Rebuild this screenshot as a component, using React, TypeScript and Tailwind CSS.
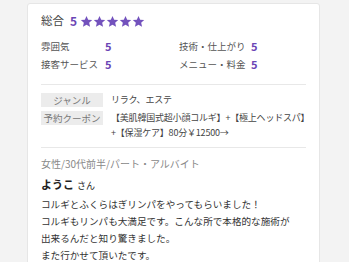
const font = "font-['Noto_Sans_CJK_JP','Noto_Sans',sans-serif]";

function Star() {
  return (
    <svg width="13" height="13" viewBox="0 0 24 24" className="fill-[#7352bd]">
      <path d="M12 1.8l3.1 6.9 7.4.7-5.6 5 1.7 7.4L12 17.9 5.4 21.8l1.7-7.4-5.6-5 7.4-.7z" />
    </svg>
  );
}

function Rating({ label, value, w }: { label: string; value: string; w: string }) {
  return (
    <div className="flex items-center h-[18px] leading-[18px]">
      <span className={`${w} text-[9.5px] text-[#555]`}>{label}</span>
      <span className="text-[11px] font-bold text-[#6b46b5]">{value}</span>
    </div>
  );
}

function InfoRow({ label, children }: { label: string; children: React.ReactNode }) {
  return (
    <div className="flex items-start">
      <span className="w-[62px] shrink-0 h-[14px] leading-[14px] mt-[0.5px] bg-[#ececec] text-center text-[9.5px] text-[#777]">
        {label}
      </span>
      <div className="ml-[8px] text-[9px] leading-[15px] text-[#444] whitespace-nowrap tracking-[-0.2px]">
        {children}
      </div>
    </div>
  );
}

export default function App() {
  return (
    <div className={`w-[349px] h-[262px] overflow-hidden bg-[#f3f3f3] ${font}`}>
      <div className="ml-[27px] mt-[3px] w-[293px] bg-white border border-[#e6e6e6] rounded-[3px] pl-[13px] pr-[10px] pt-[9px] h-[280px]">
        <div className="flex items-center h-[16px]">
          <span className="text-[11.5px] text-[#444] w-[29px]">総合</span>
          <span className="text-[12px] font-bold text-[#6b46b5] mr-[3px]">5</span>
          <div className="flex">
            <Star />
            <Star />
            <Star />
            <Star />
            <Star />
          </div>
        </div>
        <div className="grid grid-cols-[138px_1fr] mt-[8px]">
          <Rating label="雰囲気" value="5" w="w-[64px]" />
          <Rating label="技術・仕上がり" value="5" w="w-[72px]" />
          <Rating label="接客サービス" value="5" w="w-[64px]" />
          <Rating label="メニュー・料金" value="5" w="w-[72px]" />
        </div>
        <div className="border-t border-[#e8e8e8] mt-[11px] mr-[3px]" />
        <div className="flex flex-col gap-[3px] mt-[7px]">
          <InfoRow label="ジャンル">リラク、エステ</InfoRow>
          <InfoRow label="予約クーポン">
            【美肌韓国式超小顔コルギ】+【極上ヘッドスパ】
            <br />+【保湿ケア】80分￥12500→
          </InfoRow>
        </div>
        <div className="border-t border-[#e8e8e8] mt-[7px] mr-[3px]" />
        <div className="mt-[8px] text-[10px] text-[#888] leading-[16px]">女性/30代前半/パート・アルバイト</div>
        <div className="mt-[2px] leading-[16px] text-[#222]">
          <span className="text-[11px] font-bold">ようこ</span>
          <span className="text-[9px] ml-[3px]">さん</span>
        </div>
        <p className="mt-[2px] text-[9.6px] leading-[17px] text-[#333]">
          コルギとふくらはぎリンパをやってもらいました！
          <br />
          コルギもリンパも大満足です。こんな所で本格的な施術が
          <br />
          出来るんだと知り驚きました。
          <br />
          また行かせて頂いたです。
        </p>
        <div className="text-right pr-[55px] text-[9px] text-[#aaa] leading-[12px] mt-[1px]">投稿日</div>
      </div>
    </div>
  );
}
